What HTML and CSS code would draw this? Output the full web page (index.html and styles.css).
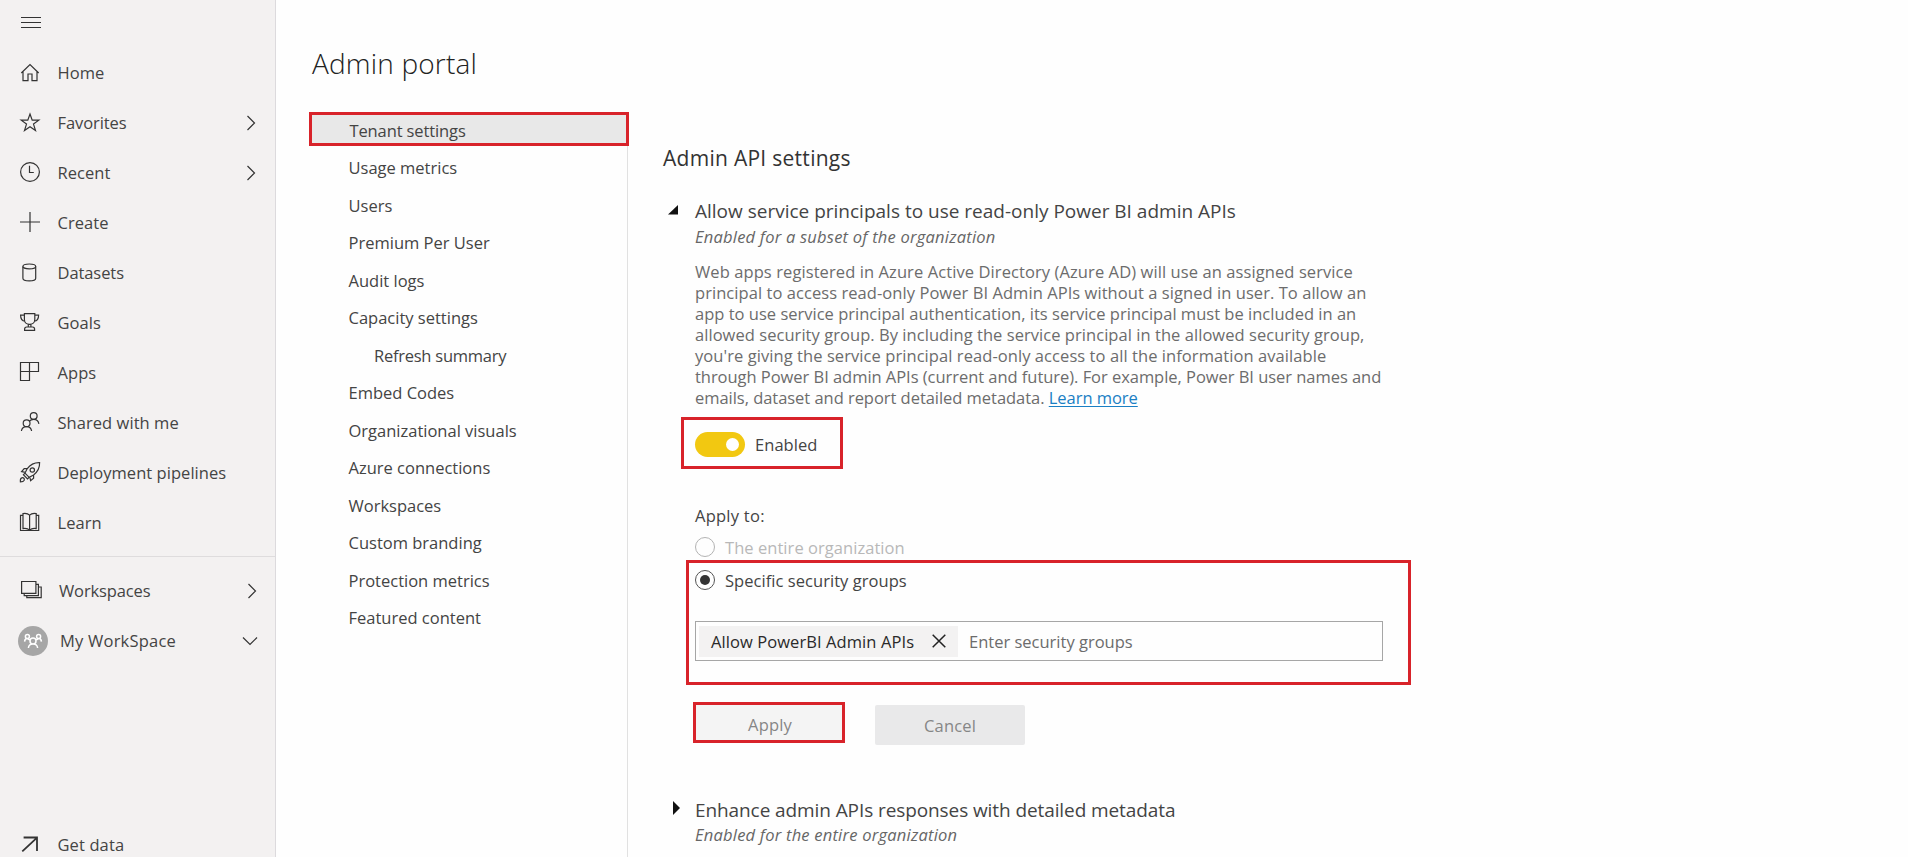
FILE: index.html
```html
<!DOCTYPE html>
<html lang="en">
<head>
<meta charset="utf-8">
<title>Admin portal</title>
<link rel="stylesheet" href="styles.css">
</head>
<body>
<div class="app">
  <aside class="sidebar">
    <button class="menu" aria-label="Menu"><i></i><i></i><i></i></button>
    <nav class="side-nav">
      <a class="side-item"><svg class="icon" viewBox="0 0 24 24"><path d="M3.3 12 12 3.6 20.7 12M5 10.6V19.6H10V13H14V19.6H19V10.6"/></svg><span>Home</span></a>
      <a class="side-item tight"><svg class="icon" viewBox="0 0 24 24"><path d="M12 3 14.2 9.2H20.8L15.5 13.1 17.5 19.6 12 15.7 6.5 19.6 8.5 13.1 3.2 9.2H9.8Z"/></svg><span>Favorites</span><svg class="chev" viewBox="0 0 16 16"><path d="M4.5 1 11.5 8 4.5 15"/></svg></a>
      <a class="side-item"><svg class="icon" viewBox="0 0 24 24"><circle cx="12" cy="11" r="9.4"/><path d="M11.5 4.8V11.5H15.8"/></svg><span>Recent</span><svg class="chev" viewBox="0 0 16 16"><path d="M4.5 1 11.5 8 4.5 15"/></svg></a>
      <a class="side-item"><svg class="icon" viewBox="0 0 24 24"><path d="M12 1V21M2 11H22"/></svg><span>Create</span></a>
      <a class="side-item tight"><svg class="icon" viewBox="0 0 24 24"><ellipse cx="11.3" cy="5.4" rx="6.4" ry="2.4"/><path d="M4.9 5.4V17.2C4.9 18.8 7.5 19.8 11.3 19.8S17.7 18.8 17.7 17.2V5.4"/></svg><span>Datasets</span></a>
      <a class="side-item"><svg class="icon" viewBox="0 0 24 24"><path d="M6.4 2.6H16.8V8.5C16.8 11.6 14.4 13.4 11.6 13.4S6.4 11.6 6.4 8.5ZM6.4 4.2H2.6C2.6 8.2 4.1 9.9 7 10.2M16.8 4.2H20.6C20.6 8.2 19.1 9.9 16.2 10.2M10.3 13.4V16M12.9 13.4V16M6.6 19.4V18.2C6.6 16.8 7.5 16 8.6 16H14.6C15.7 16 16.6 16.8 16.6 18.2V19.4Z"/></svg><span>Goals</span></a>
      <a class="side-item"><svg class="icon" viewBox="0 0 24 24"><path d="M2.5 1.5H20.5V10.5H2.5ZM11.5 1.5V19.5H2.5V10.5"/></svg><span>Apps</span></a>
      <a class="side-item"><svg class="icon" viewBox="0 0 24 24"><circle cx="15.7" cy="5" r="3.4"/><circle cx="8.6" cy="12.2" r="3.4"/><path d="M3.4 20C3.8 17.2 5.6 15.6 8.6 15.6S13.2 17.2 13.6 20M11.4 10.2C12.4 9 13.8 8.4 15.7 8.4 18.6 8.4 20.4 10 20.9 12.8"/></svg><span>Shared with me</span></a>
      <a class="side-item"><svg class="icon" viewBox="0 0 24 24"><path d="M21.6 1.6C16.5 1.4 12.3 3.6 9.3 7.6L7 12.1 11.2 16.3 15.6 14C19.8 10.8 21.8 6.7 21.6 1.6ZM9.3 7.6H6.2L3.6 10.6 7.4 11.4M15.6 14V17.2L12.6 19.7 11.8 15.9M7 12.1 5.4 13.7 9.5 17.9 11.2 16.3"/><circle cx="14.3" cy="9" r="2.2"/><path d="M3.8 16.8C5.6 16.4 6.8 17.6 6.2 19.2 5.6 20.6 4 20.8 2.4 20.8 2.2 19 2.4 17.2 3.8 16.8Z"/></svg><span>Deployment pipelines</span></a>
      <a class="side-item"><svg class="icon" viewBox="0 0 24 24"><path d="M11.6 4.2C10 2.6 7.6 2.2 5 2.6V17.6C7.6 17.2 10 17.6 11.6 19.2 13.2 17.6 15.6 17.2 18.2 17.6V2.6C15.6 2.2 13.2 2.6 11.6 4.2V19M5 4.4H2.5V19.5H20.7V4.4H18.2"/></svg><span>Learn</span></a>
    </nav>
    <nav class="side-nav workspaces">
      <a class="side-item ws"><svg class="icon" viewBox="0 0 24 24"><path d="M3.6 2.5H17.9V14.3H3.6ZM6.2 14.6V16.6H20.4V5.3H18.2M8.8 17V18.6H23.2V8H20.6"/></svg><span>Workspaces</span><svg class="chev" viewBox="0 0 16 16"><path d="M4.5 1 11.5 8 4.5 15"/></svg></a>
      <a class="side-item mine"><svg class="avatar" viewBox="0 0 30 30"><circle class="disc" cx="15" cy="15" r="15"/><path d="M15 12A3 3 0 1 1 15 18 3 3 0 1 1 15 12ZM10.4 22C10.6 19.4 12.2 18 15 18S19.4 19.4 19.6 22M9.4 8.6A2 2 0 1 1 9.4 12.6 2 2 0 1 1 9.4 8.6ZM20.6 8.6A2 2 0 1 1 20.6 12.6 2 2 0 1 1 20.6 8.6ZM6.6 15.6C6.7 13.6 7.6 12.6 9.4 12.6L12 14M23.4 15.6C23.3 13.6 22.4 12.6 20.6 12.6L18 14"/></svg><span>My WorkSpace</span><svg class="chev" viewBox="0 0 16 16"><path d="M1 4.5 8 11.5 15 4.5"/></svg></a>
    </nav>
    <a class="side-item get-data"><svg class="icon bold" viewBox="0 0 24 24"><path d="M4.3 18.3 18.8 4.8M5.6 4.5H19V18"/></svg><span>Get data</span></a>
  </aside>

  <main class="portal">
    <h1 class="title">Admin portal</h1>
    <div class="columns">
      <nav class="tabs">
        <a class="tab active">Tenant settings</a>
        <a class="tab">Usage metrics</a>
        <a class="tab">Users</a>
        <a class="tab">Premium Per User</a>
        <a class="tab">Audit logs</a>
        <a class="tab">Capacity settings</a>
        <a class="tab nested">Refresh summary</a>
        <a class="tab">Embed Codes</a>
        <a class="tab">Organizational visuals</a>
        <a class="tab">Azure connections</a>
        <a class="tab">Workspaces</a>
        <a class="tab">Custom branding</a>
        <a class="tab">Protection metrics</a>
        <a class="tab">Featured content</a>
      </nav>

      <section class="content">
        <h2 class="heading">Admin API settings</h2>

        <article class="setting">
          <svg class="marker open" viewBox="0 0 14 14"><path d="M1 10.5H11V1Z"/></svg>
          <div class="setting-body">
            <h3 class="name">Allow service principals to use read-only Power BI admin APIs</h3>
            <p class="state">Enabled for a subset of the organization</p>
            <p class="desc">
              <span class="l1">Web apps registered in Azure Active Directory (Azure AD) will use an assigned service</span>
              <span class="l2">principal to access read-only Power BI Admin APIs without a signed in user. To allow an</span>
              <span class="l3">app to use service principal authentication, its service principal must be included in an</span>
              <span class="l4">allowed security group. By including the service principal in the allowed security group,</span>
              <span class="l5">you're giving the service principal read-only access to all the information available</span>
              <span class="l6">through Power BI admin APIs (current and future). For example, Power BI user names and</span>
              <span class="l7">emails, dataset and report detailed metadata. <a class="link">Learn more</a></span>
            </p>
            <div class="switch-box"><span class="switch"><i></i></span><span>Enabled</span></div>
            <p class="apply-to">Apply to:</p>
            <label class="option disabled"><span class="radio"></span><span>The entire organization</span></label>
            <div class="group-box">
              <label class="option"><span class="radio checked"></span><span>Specific security groups</span></label>
              <div class="picker">
                <span class="chip"><span>Allow PowerBI Admin APIs</span><svg class="close" viewBox="0 0 14 14"><path d="M.7.7 13.3 13.3M13.3.7.7 13.3"/></svg></span>
                <span class="placeholder">Enter security groups</span>
              </div>
            </div>
            <div class="actions"><button class="btn apply">Apply</button><button class="btn cancel">Cancel</button></div>
          </div>
        </article>

        <article class="setting second">
          <svg class="marker closed" viewBox="0 0 14 14"><path d="M6 0V14L13 7Z"/></svg>
          <div class="setting-body">
            <h3 class="name enhance">Enhance admin APIs responses with detailed metadata</h3>
            <p class="state">Enabled for the entire organization</p>
          </div>
        </article>
      </section>
    </div>
  </main>
</div>
</body>
</html>
```
FILE: styles.css
```css
* { box-sizing: border-box; }
body, h1, h2, h3, p { margin: 0; }
body {
  height: 857px;
  overflow: hidden;
  background: #fefefe;
  color: #444;
  font: 400 16.5px "Open Sans", "Noto Sans", sans-serif;
  letter-spacing: .05px;
}
i { display: block; }
a, span, label, h1, h2, h3 { white-space: nowrap; }
svg { flex: none; fill: none; stroke: #333; stroke-width: 1.2; }

.app { display: flex; height: 857px; }

/* Sidebar */
.sidebar {
  display: flex;
  flex-direction: column;
  flex: none;
  width: 276px;
  height: 870px;
  background: #f3f1f1;
  border-right: 1px solid #dcdadd;
}
.menu {
  display: flex;
  flex-direction: column;
  gap: 4px;
  height: 48px;
  padding: 17px 0 0 21px;
  border: 0;
  background: none;
}
.menu i { width: 20px; height: 1px; background: #333; }
.side-item {
  display: flex;
  align-items: center;
  height: 50px;
  padding: 0 16px 0 18px;
  line-height: 50px;
}
.icon { width: 24px; height: 24px; margin-right: 15.5px; }
.bold { stroke-width: 1.8; }
.chev { width: 16px; height: 16px; margin-left: auto; }
.tight { letter-spacing: -.08px; }
.workspaces { margin-top: 8px; padding-top: 9px; border-top: 1px solid #dedcdd; }
.ws { padding-right: 15px; letter-spacing: -.13px; }
.ws .icon { margin-right: 17px; }
.mine { padding-right: 17px; letter-spacing: .22px; }
.avatar { width: 30px; height: 30px; margin-right: 12px; stroke: #fff; stroke-width: 1.5; }
.disc { fill: #a6a6a6; stroke: none; }
.get-data { margin-top: auto; letter-spacing: .12px; }

/* Portal */
.portal { display: flex; flex-direction: column; flex: 1; min-width: 0; }
.title {
  height: 112px;
  padding: 43px 0 0 36px;
  color: #222;
  font: 300 28px/40px "Open Sans", sans-serif;
  letter-spacing: .18px;
}
.columns { display: flex; flex: 1; }

.tabs {
  display: flex;
  flex-direction: column;
  width: 319px;
  margin-left: 33px;
  border-right: 1px solid #e1e1e1;
}
.tab { height: 37.5px; padding-left: 39.5px; line-height: 36px; letter-spacing: 0; }
.active {
  height: 34px;
  margin: 0 -2px 4px 0;
  padding-left: 37.5px;
  border: 3px solid #d8232a;
  background: #e8e8e8;
  line-height: 31px;
  letter-spacing: -.12px;
}
.nested { padding-left: 65px; letter-spacing: -.25px; }

/* Settings */
.content { padding: 31px 0 0 35px; }
.heading { color: #333; font-size: 21px; font-weight: 400; line-height: 30px; letter-spacing: .28px; }
.setting { display: flex; margin-top: 25px; }
.marker { width: 14px; height: 14px; margin: 6px 14px 0 4px; fill: #111; stroke: none; }
.closed { margin-top: 4px; }
.name { font-size: 19px; font-weight: 400; line-height: 26px; letter-spacing: 0; }
.enhance { letter-spacing: -.09px; }
.state { margin-top: 2px; color: #666; font-style: italic; line-height: 21px; letter-spacing: .22px; }
.desc { margin-top: 14px; color: #6c6c6c; line-height: 21px; }
.desc span { display: block; }
.l1 { letter-spacing: .09px; }
.l2 { letter-spacing: .06px; }
.l3 { letter-spacing: .01px; }
.l4 { letter-spacing: .05px; }
.l5 { letter-spacing: .07px; }
.l6 { letter-spacing: -.04px; }
.l7 { letter-spacing: -.04px; }
.link { color: #1a7fc4; text-decoration: underline; text-underline-offset: 2px; }

.switch-box {
  display: flex;
  align-items: center;
  gap: 10px;
  width: 162px;
  height: 52px;
  margin: 9px 0 0 -14px;
  padding: 3px 0 0 11px;
  border: 3px solid #d8232a;
  line-height: 24px;
}
.switch {
  display: flex;
  align-items: center;
  justify-content: flex-end;
  width: 50px;
  height: 25px;
  padding-right: 6px;
  border-radius: 13px;
  background: #f2c811;
}
.switch i { width: 13px; height: 13px; border-radius: 50%; background: #fff; }
.apply-to { margin-top: 35px; line-height: 24px; letter-spacing: .25px; }
.option { display: flex; align-items: center; gap: 10px; height: 26px; letter-spacing: .05px; }
.disabled { margin-top: 6px; color: #b8b8b8; }
.radio {
  display: grid;
  place-items: center;
  width: 20px;
  height: 20px;
  border: 1px solid #555;
  border-radius: 50%;
}
.disabled .radio { border-color: #b3b3b3; }
.checked::after { content: ""; width: 10px; height: 10px; border-radius: 50%; background: #333; }

.group-box {
  width: 725px;
  height: 125px;
  margin-left: -9px;
  padding: 4px 0 0 6px;
  border: 3px solid #d8232a;
}
.picker {
  display: flex;
  align-items: center;
  width: 688px;
  height: 40px;
  margin-top: 28px;
  padding-left: 3px;
  border: 1px solid #a6a6a6;
}
.chip {
  display: flex;
  align-items: center;
  justify-content: space-between;
  width: 259px;
  height: 31px;
  padding: 0 12px;
  background: #f3f2f2;
  color: #2a2a2a;
  letter-spacing: .08px;
}
.close { width: 14px; height: 14px; stroke: #222; stroke-width: 1.5; }
.placeholder { margin: 1px 0 0 11px; color: #6c6c6c; letter-spacing: 0; }

.actions { display: flex; align-items: flex-start; gap: 30px; height: 43px; margin: 17px 0 0 -2px; }
.btn {
  height: 40px;
  padding: 0;
  border: 0;
  color: #868686;
  font: inherit;
  letter-spacing: .15px;
}
.apply { width: 152px; height: 41px; padding: 4px 0 0 2px; border: 3px solid #d8232a; background: #f4f4f4; }
.cancel { width: 150px; margin-top: 3px; border-radius: 2px; background: #e9e9ea; }
.second { margin-top: 52px; }
.second .state { margin-top: 1px; }
```
